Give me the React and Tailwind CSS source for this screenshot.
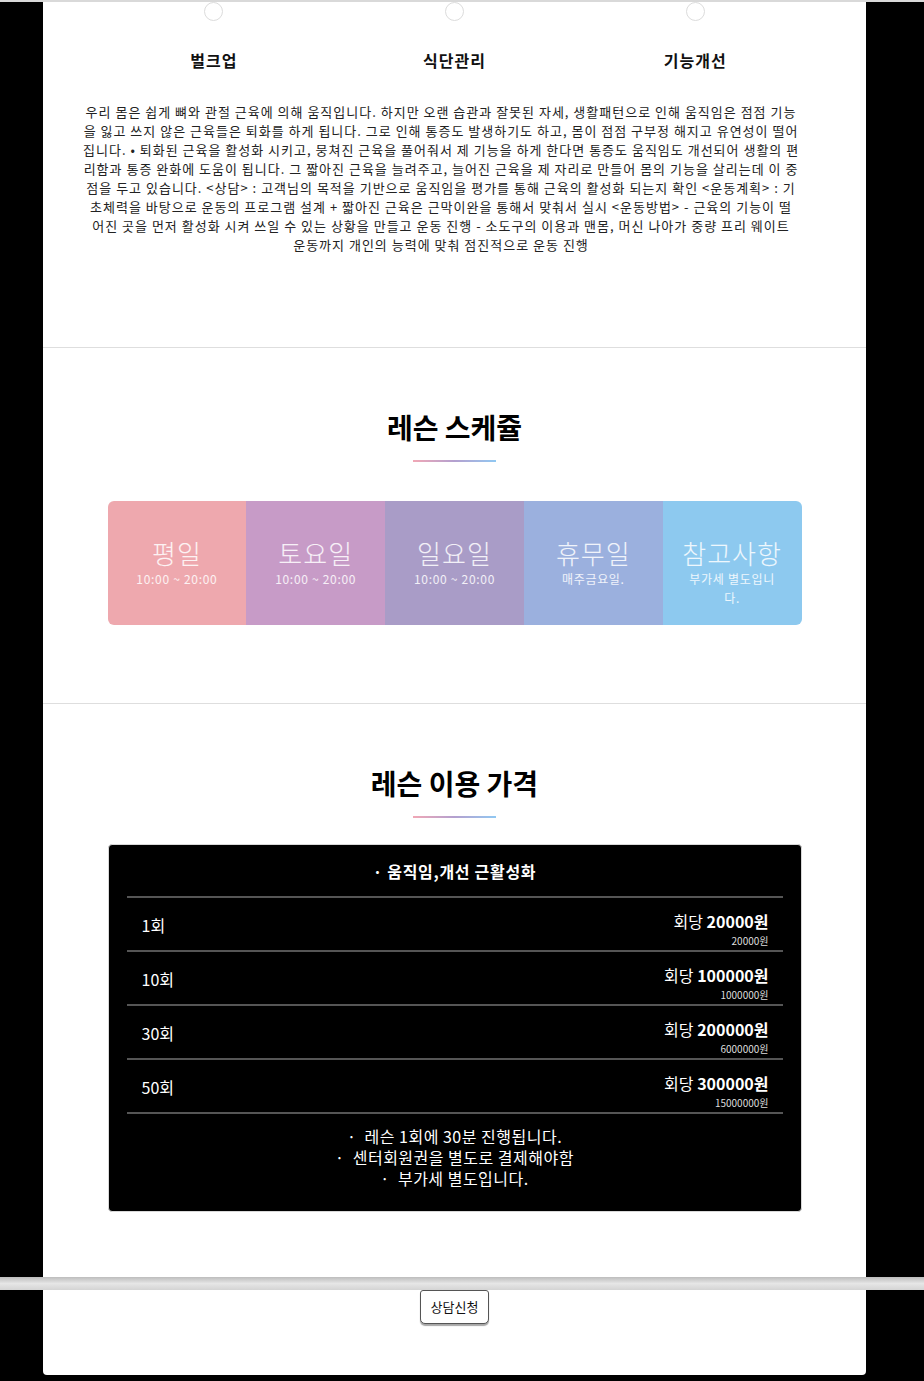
import React from "react";

const paragraphLines = [
  "우리 몸은 쉽게 뼈와 관절 근육에 의해 움직입니다. 하지만 오랜 습관과 잘못된 자세, 생활패턴으로 인해 움직임은 점점 기능",
  "을 잃고 쓰지 않은 근육들은 퇴화를 하게 됩니다. 그로 인해 통증도 발생하기도 하고, 몸이 점점 구부정 해지고 유연성이 떨어",
  "집니다. • 퇴화된 근육을 활성화 시키고, 뭉쳐진 근육을 풀어줘서 제 기능을 하게 한다면 통증도 움직임도 개선되어 생활의 편",
  "리함과 통증 완화에 도움이 됩니다. 그 짧아진 근육을 늘려주고, 늘어진 근육을 제 자리로 만들어 몸의 기능을 살리는데 이 중",
  "점을 두고 있습니다. <상담> : 고객님의 목적을 기반으로 움직임을 평가를 통해 근육의 활성화 되는지 확인 <운동계획> : 기",
  "초체력을 바탕으로 운동의 프로그램 설계 + 짧아진 근육은 근막이완을 통해서 맞춰서 실시 <운동방법> - 근육의 기능이 떨",
  "어진 곳을 먼저 활성화 시켜 쓰일 수 있는 상황을 만들고 운동 진행 - 소도구의 이용과 맨몸, 머신 나아가 중량 프리 웨이트",
  "운동까지 개인의 능력에 맞춰 점진적으로 운동 진행",
];

const schedule = [
  { title: "평일", sub: "10:00 ~ 20:00", bg: "bg-[#eea8ae]", round: "rounded-l-[6px]" },
  { title: "토요일", sub: "10:00 ~ 20:00", bg: "bg-[#c79bc7]", round: "" },
  { title: "일요일", sub: "10:00 ~ 20:00", bg: "bg-[#a99cc7]", round: "" },
  { title: "휴무일", sub: "매주금요일.", bg: "bg-[#9bb0de]", round: "" },
  { title: "참고사항", sub: "부가세 별도입니다.", bg: "bg-[#8dc9ef]", round: "rounded-r-[6px]", narrow: true },
];

const prices = [
  { label: "1회", price: "20000원", total: "20000원" },
  { label: "10회", price: "100000원", total: "1000000원" },
  { label: "30회", price: "200000원", total: "6000000원" },
  { label: "50회", price: "300000원", total: "15000000원" },
];

function Underline() {
  return (
    <div className="mx-auto mt-[15px] h-[2px] w-[83px] bg-linear-to-r from-[#f1a7b5] via-[#b3a0cf] to-[#8fc8f2]" />
  );
}

export default function App() {
  return (
    <div className="min-h-[1381px] w-full bg-black font-['Noto_Sans_CJK_KR','Noto_Sans',sans-serif] text-[#222]">
      <div className="h-[2px] w-full bg-[#d9d9d9]" />
      <div className="ml-[43px] w-[823px] bg-white">
        {/* Section 1 */}
        <section className="border-b border-[#dedede] pb-[93px]">
          <div className="mx-auto grid w-[722px] grid-cols-3">
            {["벌크업", "식단관리", "기능개선"].map((t) => (
              <div key={t} className="flex flex-col items-center">
                <div className="h-[19px] w-[19px] rounded-full border border-[#dcdcdc]" />
                <h3 className="mt-[27px] text-[16px] font-bold leading-[24px] tracking-[1px] text-[#111]">{t}</h3>
              </div>
            ))}
          </div>
          <div className="ml-[40px] mt-[30px] w-[716px] text-center text-[13px] leading-[19px] tracking-[1px] text-[#222]">
            {paragraphLines.map((l, i) => (
              <div key={i} className="whitespace-nowrap">{l}</div>
            ))}
          </div>
        </section>

        {/* Section 2 */}
        <section className="border-b border-[#dedede] pb-[78px] pt-[61px]">
          <h2 className="text-center text-[28px] font-bold leading-[36px] text-black">레슨 스케쥴</h2>
          <Underline />
          <div className="mx-auto mt-[39px] grid h-[124px] w-[694px] grid-cols-5">
            {schedule.map((s) => (
              <div key={s.title} className={`${s.bg} ${s.round} px-[8px] pt-[36px] text-center text-white/85`}>
                <div className="whitespace-nowrap text-[26px] font-light leading-[32px] tracking-[1px]">{s.title}</div>
                <div className={`${s.narrow ? "mx-auto w-[90px]" : "whitespace-nowrap"} text-[12px] leading-[19px] tracking-[0.7px]`}>
                  {s.sub}
                </div>
              </div>
            ))}
          </div>
        </section>

        {/* Section 3 */}
        <section className="pb-[65px] pt-[61px]">
          <h2 className="text-center text-[28px] font-bold leading-[36px] text-black">레슨 이용 가격</h2>
          <Underline />
          <div className="mx-auto mt-[26px] w-[694px] rounded-[4px] border border-[#d8d8d8] bg-black px-[18px] pb-[22px] pt-[14px] text-white">
            <div className="border-b-2 border-[#555] pb-[13px] text-center text-[16px] font-bold leading-[24px] tracking-[0.7px]">
              · 움직임,개선 근활성화
            </div>
            {prices.map((p) => (
              <div key={p.label} className="flex h-[54px] justify-between border-b-2 border-[#555] pl-[15px] pr-[14px]">
                <div className="pt-[16px] text-[16px] leading-[22px]">{p.label}</div>
                <div className="flex flex-col items-end pt-[12px]">
                  <div className="text-[16px] leading-[22px]">
                    회당 <span className="font-bold">{p.price}</span>
                  </div>
                  <div className="mt-[2px] text-[10px] leading-[14px] text-[#ddd]">{p.total}</div>
                </div>
              </div>
            ))}
            <div className="pt-[12px] text-center text-[16px] leading-[21px] tracking-[0.5px]">
              <div className="whitespace-pre">·  레슨 1회에 30분 진행됩니다.</div>
              <div className="whitespace-pre">·  센터회원권을 별도로 결제해야함</div>
              <div className="whitespace-pre">·  부가세 별도입니다.</div>
            </div>
          </div>
        </section>
      </div>

      {/* Gray bar */}
      <div className="h-[13px] w-full bg-linear-to-b from-[#bdbdbd] via-[#e6e6e6] to-[#d4d4d4]" />

      <div className="ml-[43px] flex h-[85px] w-[823px] justify-center rounded-b-[4px] bg-white">
        <button className="h-[34px] rounded-b-[5px] rounded-t-[3px] border border-[#555] bg-white px-[10px] text-[13px] leading-[20px] text-[#111] shadow-[0_2px_1px_rgba(0,0,0,0.35)]">
          상담신청
        </button>
      </div>
    </div>
  );
}
